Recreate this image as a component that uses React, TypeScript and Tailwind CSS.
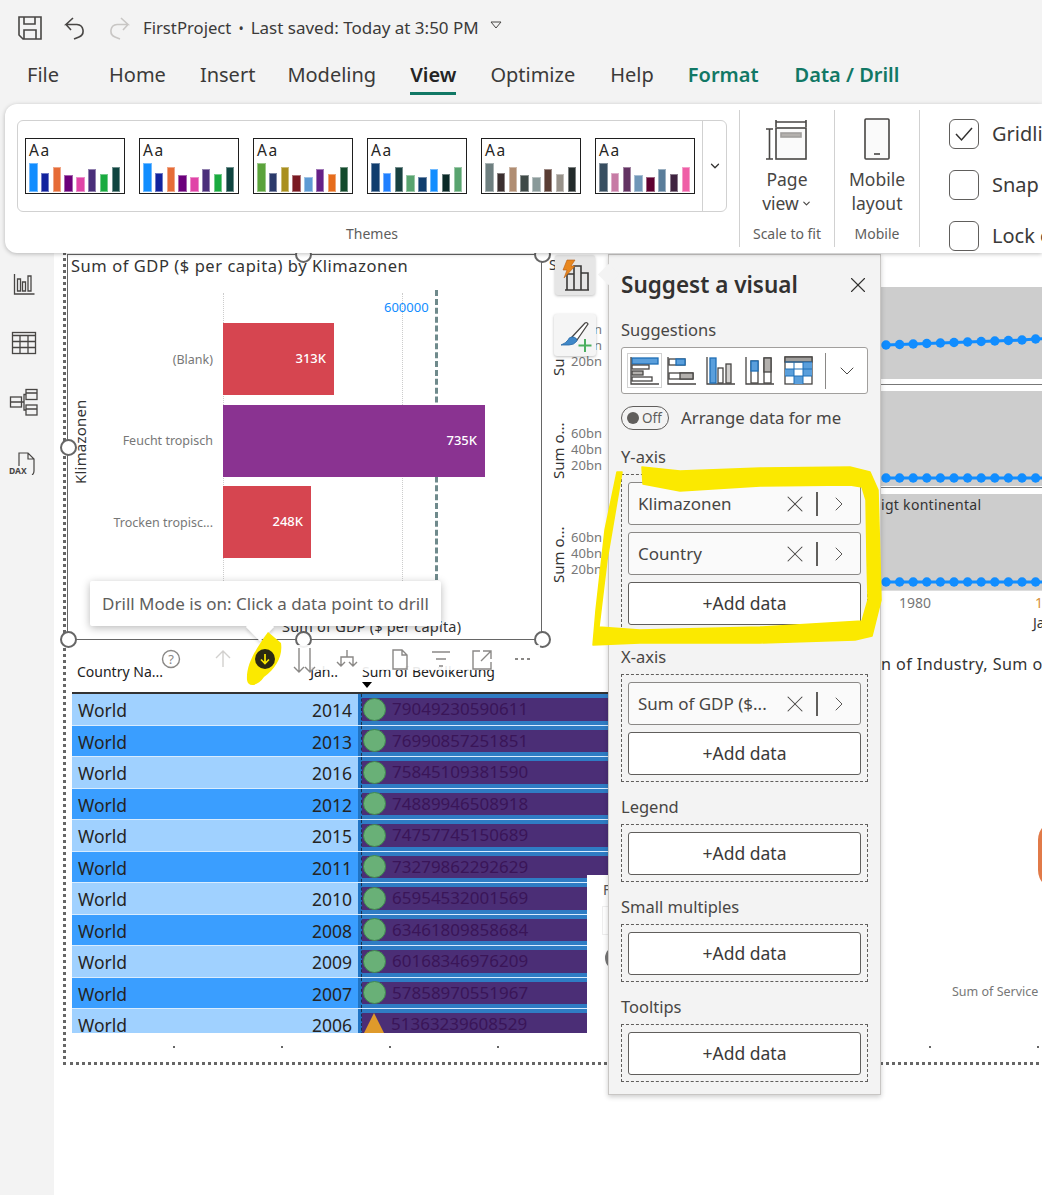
import { ChevronDown, ChevronRight, X } from 'lucide-react'

const themes = [
  ['#118dff', '#12239e', '#e66c37', '#6b007b', '#e044a7', '#4a2e7a', '#1aab40', '#0f4540'],
  ['#118dff', '#12239e', '#e66c37', '#6b007b', '#e044a7', '#4a2e7a', '#1aab40', '#0f4540'],
  ['#5ba33b', '#2b3a6b', '#a98f1f', '#7a1a22', '#5e9bd4', '#652187', '#e66c1c', '#124a2c'],
  ['#0f3d6e', '#2080ff', '#17403f', '#59a46f', '#0f3d6e', '#118dff', '#0b2a28', '#59a46f'],
  ['#6e7f80', '#3b2f2f', '#b08d72', '#3f4a48', '#8a9a9a', '#5a3d34', '#98928a', '#232b2b'],
  ['#374e60', '#c77ba5', '#633363', '#7097b8', '#5e0030', '#5a7d9a', '#3f2340', '#ef5fa7']
]
const barHeights = [29, 19, 25, 17, 15, 23, 18, 25]

const rows = [
  ['2014', '79049230590611'],
  ['2013', '76990857251851'],
  ['2016', '75845109381590'],
  ['2012', '74889946508918'],
  ['2015', '74757745150689'],
  ['2011', '73279862292629'],
  ['2010', '65954532001569'],
  ['2008', '63461809858684'],
  ['2009', '60168346976209'],
  ['2007', '57858970551967'],
  ['2006', '51363239608529']
]

const tabs = [
  { label: 'File', ml: 'ml-[27px]', cls: 'text-[#3b3a39]' },
  { label: 'Home', ml: 'ml-[50px]', cls: 'text-[#3b3a39]' },
  { label: 'Insert', ml: 'ml-[34px]', cls: 'text-[#3b3a39]' },
  { label: 'Modeling', ml: 'ml-[32px]', cls: 'text-[#3b3a39]' },
  { label: 'View', ml: 'ml-[34px]', cls: 'font-semibold text-[#242424]', active: true },
  { label: 'Optimize', ml: 'ml-[34px]', cls: 'text-[#3b3a39]' },
  { label: 'Help', ml: 'ml-[35px]', cls: 'text-[#3b3a39]' },
  { label: 'Format', ml: 'ml-[34px]', cls: 'font-semibold text-[#117865]' },
  { label: 'Data / Drill', ml: 'ml-[36px]', cls: 'font-semibold text-[#117865]' }
]

function ThemeThumb({ colors }: { colors: string[] }) {
  return (
    <div className="flex h-[56px] w-[100px] shrink-0 flex-col border-[1.5px] border-[#1f1f1f] bg-white px-[3px]">
      <span className="h-[24px] text-[15.5px] leading-[22px] tracking-[1.5px] text-[#252423]">Aa</span>
      <div className="flex h-[29px] items-end gap-[3.3px]">
        {colors.map((color, i) => (
          <div
            key={i}
            className="w-[8.5px] shrink-0 border border-white/40"
            style={{ height: barHeights[i], backgroundColor: color }}
          />
        ))}
      </div>
    </div>
  )
}

function Ribbon() {
  return (
    <div className="absolute left-[5px] top-[104px] z-30 flex h-[149px] w-[1037px] rounded-l-[12px] bg-white shadow-[0_1px_4px_rgba(0,0,0,0.25)]">
      <div className="flex w-[734px] shrink-0 flex-col pl-[12px]">
        <div className="mt-[16px] flex h-[92px] w-[710px] items-center rounded-[6px] border border-[#d1d1d1] pl-[7px]">
          <div className="flex w-[677px] gap-[14px]">
            {themes.map((colors, i) => (
              <ThemeThumb key={i} colors={colors} />
            ))}
          </div>
          <div className="flex h-full flex-1 items-center justify-center border-l border-[#d1d1d1]">
            <ChevronDown size={14} strokeWidth={2.2} className="text-[#323130]" />
          </div>
        </div>
        <span className="mt-[12px] w-[710px] text-center text-[14px] leading-[20px] text-[#605e5c]">Themes</span>
      </div>
      <div className="my-[6px] flex w-[95px] shrink-0 flex-col items-center border-l border-[#d1d1d1]">
        <svg width="44" height="44" viewBox="0 0 44 44" className="mt-[8px]" fill="none" stroke="#484644" strokeWidth="1.6">
          <path d="M11 2v7M11 4h30M41 2v7M1 11h7M4.5 11v30M1 41h7" />
          <rect x="11" y="10" width="30" height="31" fill="#fafafa" />
          <rect x="16" y="15" width="20" height="4" fill="#b3b0ad" stroke="#a19f9d" />
        </svg>
        <span className="mt-[5px] text-[17.5px] leading-[24px] text-[#484644]">Page</span>
        <span className="flex items-center text-[17.5px] leading-[24px] text-[#484644]">
          view
          <ChevronDown size={11} strokeWidth={2.5} className="ml-[2px]" />
        </span>
        <span className="mt-[9px] text-[14px] leading-[20px] text-[#605e5c]">Scale to fit</span>
      </div>
      <div className="my-[6px] flex w-[85px] shrink-0 flex-col items-center border-l border-[#d1d1d1]">
        <svg width="28" height="44" viewBox="0 0 28 44" className="mt-[8px]" fill="none" stroke="#484644" strokeWidth="1.6">
          <rect x="2" y="1" width="24" height="40" fill="#fafafa" rx="1" />
          <path d="M11 36h6" />
        </svg>
        <span className="mt-[5px] text-[17.5px] leading-[24px] text-[#484644]">Mobile</span>
        <span className="text-[17.5px] leading-[24px] text-[#484644]">layout</span>
        <span className="mt-[9px] text-[14px] leading-[20px] text-[#605e5c]">Mobile</span>
      </div>
      <div className="my-[6px] flex flex-1 flex-col gap-[21px] border-l border-[#d1d1d1] pl-[29px] pt-[9px]">
        {[
          ['Gridlines', true],
          ['Snap to grid', false],
          ['Lock objects', false]
        ].map(([label, checked]) => (
          <div key={label as string} className="flex h-[30px] shrink-0 items-center gap-[13px] whitespace-nowrap">
            <div className="flex h-[30px] w-[30px] shrink-0 items-center justify-center rounded-[6px] border border-[#605e5c]">
              {checked && (
                <svg width="20" height="16" viewBox="0 0 20 16" fill="none" stroke="#323130" strokeWidth="1.5">
                  <path d="M2 8l5.5 6L18 2" />
                </svg>
              )}
            </div>
            <span className="text-[20px] text-[#3b3a39]">{label}</span>
          </div>
        ))}
      </div>
    </div>
  )
}

function SideRail() {
  return (
    <aside className="flex w-[54px] shrink-0 flex-col items-center bg-[#f3f3f3] pr-[6px] pt-[167px]">
      <svg width="24" height="24" viewBox="0 0 24 24" fill="none" stroke="#484644" strokeWidth="1.3">
        <path d="M2.5 2v20h20" />
        <path d="M5.5 19V7h3v12zM10.5 19V10h3v9zM16 19V4h3v15z" />
      </svg>
      <svg width="26" height="24" viewBox="0 0 26 24" className="mt-[35px]" fill="none" stroke="#484644" strokeWidth="1.3">
        <rect x="1.5" y="1.5" width="23" height="21" />
        <path d="M1.5 4.5h23M1.5 10.5h23M1.5 16.5h23M9 4.5v18M17 4.5v18" />
      </svg>
      <svg width="30" height="30" viewBox="0 0 30 30" className="mt-[33px]" fill="none" stroke="#484644" strokeWidth="1.3">
        <rect x="17" y="1.5" width="11" height="10" />
        <rect x="1.5" y="9" width="11" height="10" />
        <rect x="17" y="17" width="11" height="10" />
        <path d="M12.5 14H15V6.5h2M15 14v8h2M17 5h11M17 21h11M1.5 14h11" />
      </svg>
      <div className="relative mt-[33px] h-[28px] w-[30px]">
        <svg width="30" height="24" viewBox="0 0 30 24" className="absolute left-[3px] top-0" fill="none" stroke="#484644" strokeWidth="1.2">
          <path d="M7 15V2h9l6 6v12q0 3-2 4M16 2v6h6" />
        </svg>
        <span className="absolute left-0 top-[14px] text-[8.5px] font-bold leading-[12px] text-[#484644]">DAX</span>
      </div>
    </aside>
  )
}

function Handle({ pos }: { pos: string }) {
  return <div className={`absolute h-[17px] w-[17px] rounded-full border-2 border-[#666] bg-white ${pos}`} />
}

function ChartVisual() {
  return (
    <div className="absolute left-[67px] top-[254px] h-[386px] w-[475px] border border-[#666] bg-white">
      <div className="absolute left-[3px] top-[1px] whitespace-nowrap text-[16.5px] leading-[20px] tracking-[0.55px] text-[#333]">
        Sum of GDP ($ per capita) by Klimazonen
      </div>
      <div className="absolute left-[155px] top-[38px] h-[290px] border-l border-dotted border-[#ccc]" />
      <div className="absolute left-[334px] top-[38px] h-[290px] border-l border-dotted border-[#ccc]" />
      <div className="absolute left-[367px] top-[35px] h-[290px] border-l-[3px] border-dashed border-[#6f8a8c]" />
      <span className="absolute left-[316px] top-[43px] text-[13px] leading-[18px] text-[#118dff]">600000</span>
      <span className="absolute left-[3px] top-[229px] origin-top-left -rotate-90 whitespace-nowrap text-[15px] leading-[18px] tracking-[0.2px] text-[#333]">
        Klimazonen
      </span>
      <div className="relative ml-[5px] mt-[68px] flex w-[420px] flex-col gap-[9.5px]">
        {[
          { label: '(Blank)', width: 111, value: '313K', color: 'bg-[#d64550]' },
          { label: 'Feucht tropisch', width: 262, value: '735K', color: 'bg-[#8a3391]' },
          { label: 'Trocken tropisc...', width: 88, value: '248K', color: 'bg-[#d64550]' }
        ].map((bar) => (
          <div key={bar.label} className="flex h-[72px] items-center">
            <span className="w-[140px] shrink-0 whitespace-nowrap pt-[2px] text-right text-[12.5px] text-[#777]">{bar.label}</span>
            <div
              className={`ml-[10px] flex h-full items-center justify-end pr-[8px] text-[13px] font-medium text-white ${bar.color}`}
              style={{ width: bar.width }}
            >
              {bar.value}
            </div>
          </div>
        ))}
      </div>
      <span className="absolute left-[214px] top-[361px] text-[14.5px] leading-[20px] tracking-[0.2px] text-[#333]">
        Sum of GDP ($ per capita)
      </span>
    </div>
  )
}

function VisualHeader() {
  const stroke = '#8a8886'
  return (
    <div className="absolute left-[150px] top-[645px] z-10 flex h-[25px] w-[390px] items-start bg-white/90">
      <svg width="390" height="30" viewBox="150 645 390 30" className="overflow-visible" fill="none" stroke={stroke} strokeWidth="1.4">
        <circle cx="171" cy="659" r="8.5" />
        <text x="171" y="664" textAnchor="middle" fontSize="13" fill={stroke} stroke="none">?</text>
        <path d="M223 667v-16M216 658l7-7 7 7" stroke="#d2d0ce" />
        <path d="M299 648v24M294 667l5 5 5-5M310 648v24M305 667l5 5 5-5" />
        <path d="M347 650v7M341 666v-9h12v9M337 662l4 4 4-4M349 662l4 4 4-4" />
        <path d="M393 650h9l5 5v14h-14zM402 650v5h5" />
        <path d="M432 652h18M436 659h10M439 666h4" />
        <path d="M480 651h-7v18h18v-7M483 651h8v8M491 651l-10 10" />
        <path d="M515 659h3M521 659h3M527 659h3" strokeWidth="2" />
      </svg>
    </div>
  )
}

function DataTable() {
  return (
    <div className="absolute left-[72px] top-[660px] w-[537px]">
      <div className="relative flex h-[34px] items-end whitespace-nowrap border-b-2 border-[#333] pb-[11px] text-[14px] leading-[18px] text-[#222]">
        <span className="ml-[5px] w-[200px]">Country Na...</span>
        <span className="w-[61px] text-right">Jah..</span>
        <span className="ml-[24px]">Sum of Bevölkerung</span>
        <div className="absolute left-[290px] bottom-[4px] h-0 w-0 border-x-[5px] border-t-[6px] border-x-transparent border-t-black" />
      </div>
      <div className="h-[339px] overflow-hidden">
        {rows.map(([year, value], i) => (
          <div
            key={year}
            className="flex h-[31.5px] border-b border-[#d8ecff] text-[17.5px] leading-[32px] text-[#252423]"
          >
            <div className={`flex w-[286px] justify-between px-[6px] ${i % 2 === 0 ? 'bg-[#a0d1ff]' : 'bg-[#3a9eff]'}`}>
              <span>World</span>
              <span>{year}</span>
            </div>
            <div className="w-[4px] border-r border-dashed border-r-[#1c3050] bg-[#1f73c4]" />
            <div className="flex flex-1 items-center border-y-[4px] border-y-[#2f7cc4] bg-[#4b2e76] text-[#3a1558]">
              {i < 10 ? (
                <span className="ml-[1px] h-[23px] w-[23px] shrink-0 rounded-full border border-[#3f8a4f] bg-[#69b077]" />
              ) : (
                <span className="ml-[1px] h-0 w-0 shrink-0 border-x-[11px] border-b-[22px] border-x-transparent border-b-[#df9a2b]" />
              )}
              <span className="ml-[6px] text-[17px]">{value}</span>
            </div>
          </div>
        ))}
      </div>
    </div>
  )
}

function MiniLine({ pos, points }: { pos: string; points: number[] }) {
  return (
    <div className={`absolute left-[881px] w-[161px] bg-[#cdcdcd] ${pos}`}>
      <svg width="161" height="100%" className="h-full" fill="#118dff" stroke="#118dff" strokeWidth="3">
        <polyline fill="none" points={points.map((y, i) => `${5 + i * 13.6},${y}`).join(' ')} />
        {points.map((y, i) => (
          <circle key={i} cx={5 + i * 13.6} cy={y} r="4.7" stroke="none" />
        ))}
      </svg>
    </div>
  )
}

function RightVisuals() {
  const flat = (y: number) => Array.from({ length: 13 }, () => y)
  return (
    <>
      <MiniLine pos="top-[287px] h-[92px]" points={[58, 57.5, 57, 56.5, 56, 55.5, 55, 54.5, 54, 53.5, 53, 52, 51.5]} />
      <div className="absolute left-[881px] top-[384px] h-px w-[161px] bg-[#777]" />
      <MiniLine pos="top-[391px] h-[95px]" points={flat(87)} />
      <div className="absolute left-[881px] top-[487px] h-px w-[161px] bg-[#777]" />
      <MiniLine pos="top-[494px] h-[96px]" points={flat(88)} />
      <span className="absolute left-[881px] top-[495px] text-[14px] leading-[20px] tracking-[0.3px] text-[#333]">
        igt kontinental
      </span>
      <div className="absolute left-[881px] top-[590px] h-px w-[161px] bg-[#ddd]" />
      <span className="absolute left-[899px] top-[594px] text-[14px] leading-[18px] text-[#777]">1980</span>
      <span className="absolute left-[1035px] top-[594px] text-[14px] leading-[18px] text-[#d8903a]">1</span>
      <span className="absolute left-[1033px] top-[614px] text-[14px] leading-[18px] text-[#333]">Ja</span>
      <span className="absolute left-[881px] top-[654px] whitespace-nowrap text-[16.2px] leading-[20px] tracking-[0.4px] text-[#333]">
        n of Industry, Sum of
      </span>
      <div className="absolute left-[1038px] top-[820px] h-[70px] w-[40px] rounded-full bg-[#e17a48]" />
      <span className="absolute left-[952px] top-[984px] whitespace-nowrap text-[12.5px] leading-[16px] text-[#777]">
        Sum of Service
      </span>
    </>
  )
}

function MiddleAxes() {
  return (
    <>
      <span className="absolute left-[549px] top-[256px] text-[14px] leading-[18px] text-[#333]">S</span>
      {[
        { top: 'top-[321px]', labels: ['n', 'n', '20bn'] },
        { top: 'top-[425px]', labels: ['60bn', '40bn', '20bn'] },
        { top: 'top-[529px]', labels: ['60bn', '40bn', '20bn'] }
      ].map((axis) => (
        <div key={axis.top} className={`absolute left-[562px] w-[40px] text-right text-[13px] leading-[16px] text-[#777] ${axis.top}`}>
          {axis.labels.map((label, i) => (
            <div key={i}>{label}</div>
          ))}
        </div>
      ))}
      <span className="absolute left-[549px] top-[376px] origin-top-left -rotate-90 text-[15px] leading-[18px] text-[#333]">Su</span>
      <span className="absolute left-[549px] top-[479px] origin-top-left -rotate-90 whitespace-nowrap text-[15px] leading-[18px] text-[#333]">Sum o...</span>
      <span className="absolute left-[549px] top-[583px] origin-top-left -rotate-90 whitespace-nowrap text-[15px] leading-[18px] text-[#333]">Sum o...</span>
      <div className="absolute left-[555px] top-[255px] z-20 flex h-[40px] w-[40px] items-center justify-center rounded-[3px] bg-[#e6e6e6] shadow-[0_1px_3px_rgba(0,0,0,0.25)]">
        <svg width="34" height="34" viewBox="0 0 34 34" fill="none">
          <path d="M9 32V16h7v16M16 32V8h7v24M23 32V15h7v17M7 32h24" stroke="#3b3a39" strokeWidth="1.6" />
          <path d="M9 2h8l-4 6h4L6 20l3-8H5z" fill="#e8871e" stroke="#b55a10" strokeWidth="0.6" />
        </svg>
      </div>
      <div className="absolute left-[554px] top-[314px] z-20 flex h-[42px] w-[42px] items-center justify-center rounded-[3px] bg-[#f5f5f5] shadow-[0_1px_3px_rgba(0,0,0,0.25)]">
        <svg width="36" height="36" viewBox="0 0 36 36" fill="none">
          <path d="M15 20L28 6q2-1 3 1L20 23z" fill="#fff" stroke="#484644" strokeWidth="1.3" />
          <path d="M15 20q5 0 5 4-3 4-8 4H4q5-2 7-5 1-3 4-3z" fill="#3f87c8" stroke="#2a6aa5" strokeWidth="0.8" />
          <path d="M28 22v13M21.5 28.5h13" stroke="#4caf5f" strokeWidth="2" />
        </svg>
      </div>
    </>
  )
}

function Well({ label, addData }: { label: string; addData?: boolean }) {
  if (addData) {
    return (
      <div className="flex h-[43px] items-center justify-center rounded-[3px] border border-[#605e5c] bg-white text-[17.5px] text-[#3b3a39]">
        +Add data
      </div>
    )
  }
  return (
    <div className="flex h-[43px] items-center rounded-[3px] border border-[#8a8886] bg-[#fafafa] pl-[9px] text-[17px] text-[#484644]">
      <span className="flex-1 whitespace-nowrap">{label}</span>
      <div className="flex w-[30px] items-center justify-center">
        <X size={28} strokeWidth={0.9} className="shrink-0 text-[#484644]" />
      </div>
      <div className="ml-[6px] h-[24px] w-[2px] bg-[#605e5c]" />
      <div className="flex w-[42px] items-center justify-center">
        <ChevronRight size={24} strokeWidth={0.9} className="text-[#484644]" />
      </div>
    </div>
  )
}

function FieldSection({ title, fields }: { title: string; fields: string[] }) {
  return (
    <section className="mt-[13px]">
      <h3 className="h-[24px] text-[16.5px] font-normal leading-[24px] text-[#484644]">{title}</h3>
      <div className="mt-[5px] flex flex-col gap-[7px] border border-dashed border-[#605e5c] px-[6px] pb-[6px] pt-[7px]">
        {fields.map((field) => (
          <Well key={field} label={field} />
        ))}
        <Well label="+Add data" addData />
      </div>
    </section>
  )
}

function SuggestIcons() {
  const s = '#484644'
  const b = '#5a9fdc'
  return (
    <div className="flex h-full items-center pl-[5px]">
      <div className="flex h-[35px] w-[35px] items-center justify-center border border-[#d1d1d1]">
        <svg width="29" height="29" viewBox="0 0 29 29" fill="none" stroke={s} strokeWidth="1.3">
          <rect x="2" y="2" width="26" height="6" fill={b} stroke="#1f6fb5" />
          <rect x="2" y="9" width="17" height="4" fill="#fff" />
          <rect x="2" y="15" width="11" height="4" fill="#b3b0ad" />
          <rect x="2" y="21" width="20" height="4" fill="#fff" />
          <path d="M1 1v27h28" />
        </svg>
      </div>
      <svg width="29" height="29" viewBox="0 0 29 29" className="ml-[5px]" fill="none" stroke={s} strokeWidth="1.3">
        <path d="M1 1v27h28" />
        <rect x="2" y="3" width="16" height="6" fill="#fff" />
        <rect x="9" y="3" width="9" height="6" fill={b} stroke="#1f6fb5" />
        <rect x="2" y="17" width="24" height="6" fill="#fff" />
        <rect x="13" y="17" width="13" height="6" fill="#b3b0ad" />
      </svg>
      <svg width="29" height="29" viewBox="0 0 29 29" className="ml-[10px]" fill="none" stroke={s} strokeWidth="1.3">
        <path d="M1 1v27h28" />
        <rect x="4" y="2" width="6" height="25" fill={b} stroke="#1f6fb5" />
        <rect x="12" y="12" width="5" height="15" fill="#fff" />
        <rect x="20" y="8" width="5" height="19" fill="#d2d0ce" />
      </svg>
      <svg width="29" height="29" viewBox="0 0 29 29" className="ml-[10px]" fill="none" stroke={s} strokeWidth="1.3">
        <path d="M1 1v27h28" />
        <rect x="6" y="5" width="7" height="22" fill="#fff" />
        <rect x="6" y="5" width="7" height="10" fill={b} stroke="#1f6fb5" />
        <rect x="19" y="2" width="7" height="25" fill="#fff" />
        <rect x="19" y="2" width="7" height="14" fill="#b3b0ad" />
      </svg>
      <svg width="29" height="29" viewBox="0 0 29 29" className="ml-[10px]" fill="none" stroke={s} strokeWidth="1.3">
        <rect x="1" y="1" width="27" height="27" fill="#fff" />
        <rect x="1" y="1" width="27" height="5" fill="#a19f9d" />
        <rect x="19" y="6" width="9" height="7" fill={b} stroke="none" />
        <rect x="1" y="13" width="9" height="7" fill={b} stroke="none" />
        <rect x="19" y="13" width="9" height="7" fill={b} stroke="none" />
        <rect x="10" y="20" width="9" height="8" fill={b} stroke="none" />
        <path d="M1 6h27M1 13h27M1 20h27M10 6v22M19 6v22" stroke="#1f6fb5" strokeWidth="1" />
      </svg>
      <div className="ml-[12px] h-[36px] w-px bg-[#8a8886]" />
      <ChevronDown size={24} strokeWidth={1} className="ml-[9px] text-[#484644]" />
    </div>
  )
}

function SuggestPane() {
  return (
    <div className="absolute left-[608px] top-[254px] z-20 h-[841px] w-[273px] border border-[#c8c6c4] bg-[#f3f3f3] px-[12px] shadow-[0_2px_5px_rgba(0,0,0,0.2)]">
      <div className="absolute -left-[8px] top-[12px] h-[15px] w-[15px] rotate-45 bg-[#f3f3f3]" />
      <div className="mt-[15px] flex h-[30px] items-center justify-between">
        <h2 className="text-[22.5px] font-semibold leading-[30px] text-[#323130]">Suggest a visual</h2>
        <X size={26} strokeWidth={1} className="mr-[-3px] shrink-0 text-[#323130]" />
      </div>
      <div className="mt-[18px] h-[24px] text-[16.5px] leading-[24px] text-[#484644]">Suggestions</div>
      <div className="mt-[5px] h-[47px] rounded-[3px] border border-[#a19f9d] bg-white">
        <SuggestIcons />
      </div>
      <div className="mt-[11px] flex h-[26px] items-center">
        <div className="flex h-[24px] w-[48px] items-center rounded-full border border-[#605e5c] pl-[5px]">
          <span className="h-[12px] w-[12px] rounded-full bg-[#605e5c]" />
          <span className="ml-[3px] text-[13.5px] text-[#605e5c]">Off</span>
        </div>
        <span className="ml-[12px] text-[16.8px] text-[#484644]">Arrange data for me</span>
      </div>
      <div className="h-px" />
      <FieldSection title="Y-axis" fields={['Klimazonen', 'Country']} />
      <FieldSection title="X-axis" fields={['Sum of GDP ($...']} />
      <FieldSection title="Legend" fields={[]} />
      <FieldSection title="Small multiples" fields={[]} />
      <FieldSection title="Tooltips" fields={[]} />
    </div>
  )
}

function DrillTooltip() {
  return (
    <div className="absolute left-[90px] top-[581px] z-20 flex h-[45px] w-[351px] items-center justify-center rounded-[2px] bg-white text-[17px] text-[#605e5c] shadow-[0_2px_8px_rgba(0,0,0,0.28)]">
      Drill Mode is on: Click a data point to drill
      <div className="absolute left-[160px] top-[36px] h-[20px] w-[20px] rotate-45 bg-white shadow-[2px_2px_3px_rgba(0,0,0,0.12)]" />
    </div>
  )
}

function Highlights() {
  return (
    <svg width="1042" height="1195" className="pointer-events-none absolute left-0 top-0 z-40" fill="none">
      <path
        className="mix-blend-multiply"
        d="M617 472L622 472L607 560L599 627L640 630L760 627L862 621L868 600L867 560L866 500L862 487L850 485L760 486L680 491L643 484L642 467L680 471L760 468L850 467L870 472L878 490L880 560L881 600L872 636L855 640L760 643L640 643L593 645L596 610L605 530Z"
        fill="#fbe900"
        stroke="#fbe900"
        strokeWidth="1.5"
        strokeLinejoin="round"
      />
      <path
        className="mix-blend-multiply"
        d="M268 632L281 643C283 656 276 668 264 677C258 686 248 688 247 680C246 665 255 650 268 632Z"
        fill="#fbe900"
      />
      <circle cx="265" cy="659" r="10" fill="#2b2a12" />
      <path d="M265 654v9M261 659.5l4 4 4-4" stroke="#f9e800" strokeWidth="1.7" />
    </svg>
  )
}

export default function App() {
  const footDots = [173, 281, 389, 497, 929, 1037]
  return (
    <div className="relative h-[1195px] w-[1042px] overflow-hidden bg-white font-['Noto_Sans',sans-serif]">
      <header className="h-[105px] bg-[#f3f3f3]">
        <div className="flex h-[56px] items-center pl-[18px]">
          <svg width="24" height="24" viewBox="0 0 24 24" fill="none" stroke="#484644" strokeWidth="1.6">
            <path d="M1 1h22v22H5l-4-4zM6 1v7h11V1M6 23v-9h12v9" />
          </svg>
          <svg width="22" height="24" viewBox="0 0 22 24" className="ml-[22px]" fill="none" stroke="#484644" strokeWidth="1.6">
            <path d="M9 2L2 8.5h11a6.5 6.5 0 0 1 2 12.5L10 23M2 8.5L7 14" />
          </svg>
          <svg width="22" height="24" viewBox="0 0 22 24" className="ml-[22px]" fill="none" stroke="#c8c6c4" strokeWidth="1.6">
            <path d="M13 2l7 6.5H9a6.5 6.5 0 0 0-2 12.5l5 2M20 8.5L15 14" />
          </svg>
          <span className="ml-[13px] whitespace-nowrap text-[16.7px] text-[#3b3a39]">FirstProject</span>
          <span className="mx-[7px] text-[14px] text-[#3b3a39]">•</span>
          <span className="whitespace-nowrap text-[17px] text-[#3b3a39]">Last saved: Today at 3:50 PM</span>
          <svg width="12" height="8" viewBox="0 0 12 8" className="mb-[6px] ml-[11px]" fill="none" stroke="#484644" strokeWidth="1">
            <path d="M1 1h10L6 7z" />
          </svg>
        </div>
        <nav className="flex h-[38px] items-start">
          {tabs.map((tab) => (
            <div key={tab.label} className={`relative whitespace-nowrap text-[20px] leading-[38px] ${tab.ml} ${tab.cls}`}>
              {tab.label}
              {tab.active && <div className="absolute bottom-[-1px] left-0 h-[3px] w-full bg-[#117865]" />}
            </div>
          ))}
        </nav>
      </header>
      <Ribbon />
      <div className="flex h-[1090px]">
        <SideRail />
        <main className="flex-1 bg-white" />
      </div>

      <div className="absolute left-[63px] top-[240px] h-[825px] w-[1000px] border-b-[3px] border-l-[3px] border-dotted border-[#666]" />
      <ChartVisual />
      <Handle pos="left-[60px] top-[439px]" />
      <Handle pos="left-[295px] top-[631px]" />
      <Handle pos="left-[60px] top-[631px]" />
      <Handle pos="left-[534px] top-[631px]" />
      <Handle pos="left-[295px] top-[246px]" />
      <Handle pos="left-[534px] top-[246px]" />
      <MiddleAxes />
      <DataTable />
      <VisualHeader />
      <div className="absolute left-[587px] top-[875px] z-10 h-[170px] w-[30px] bg-white">
        <span className="absolute left-[16px] top-[4px] text-[14px] text-[#555]">F</span>
        <div className="absolute left-[15px] top-[31px] h-[29px] w-[20px] border border-[#eee]" />
        <div className="absolute left-[18px] top-[71px] h-[24px] w-[24px] rounded-full border-[3px] border-[#777]" />
      </div>
      <RightVisuals />
      <SuggestPane />
      <DrillTooltip />
      {footDots.map((x) => (
        <div key={x} className="absolute top-[1046px] h-[2px] w-[2px] bg-[#666]" style={{ left: x }} />
      ))}
      <Highlights />
    </div>
  )
}
